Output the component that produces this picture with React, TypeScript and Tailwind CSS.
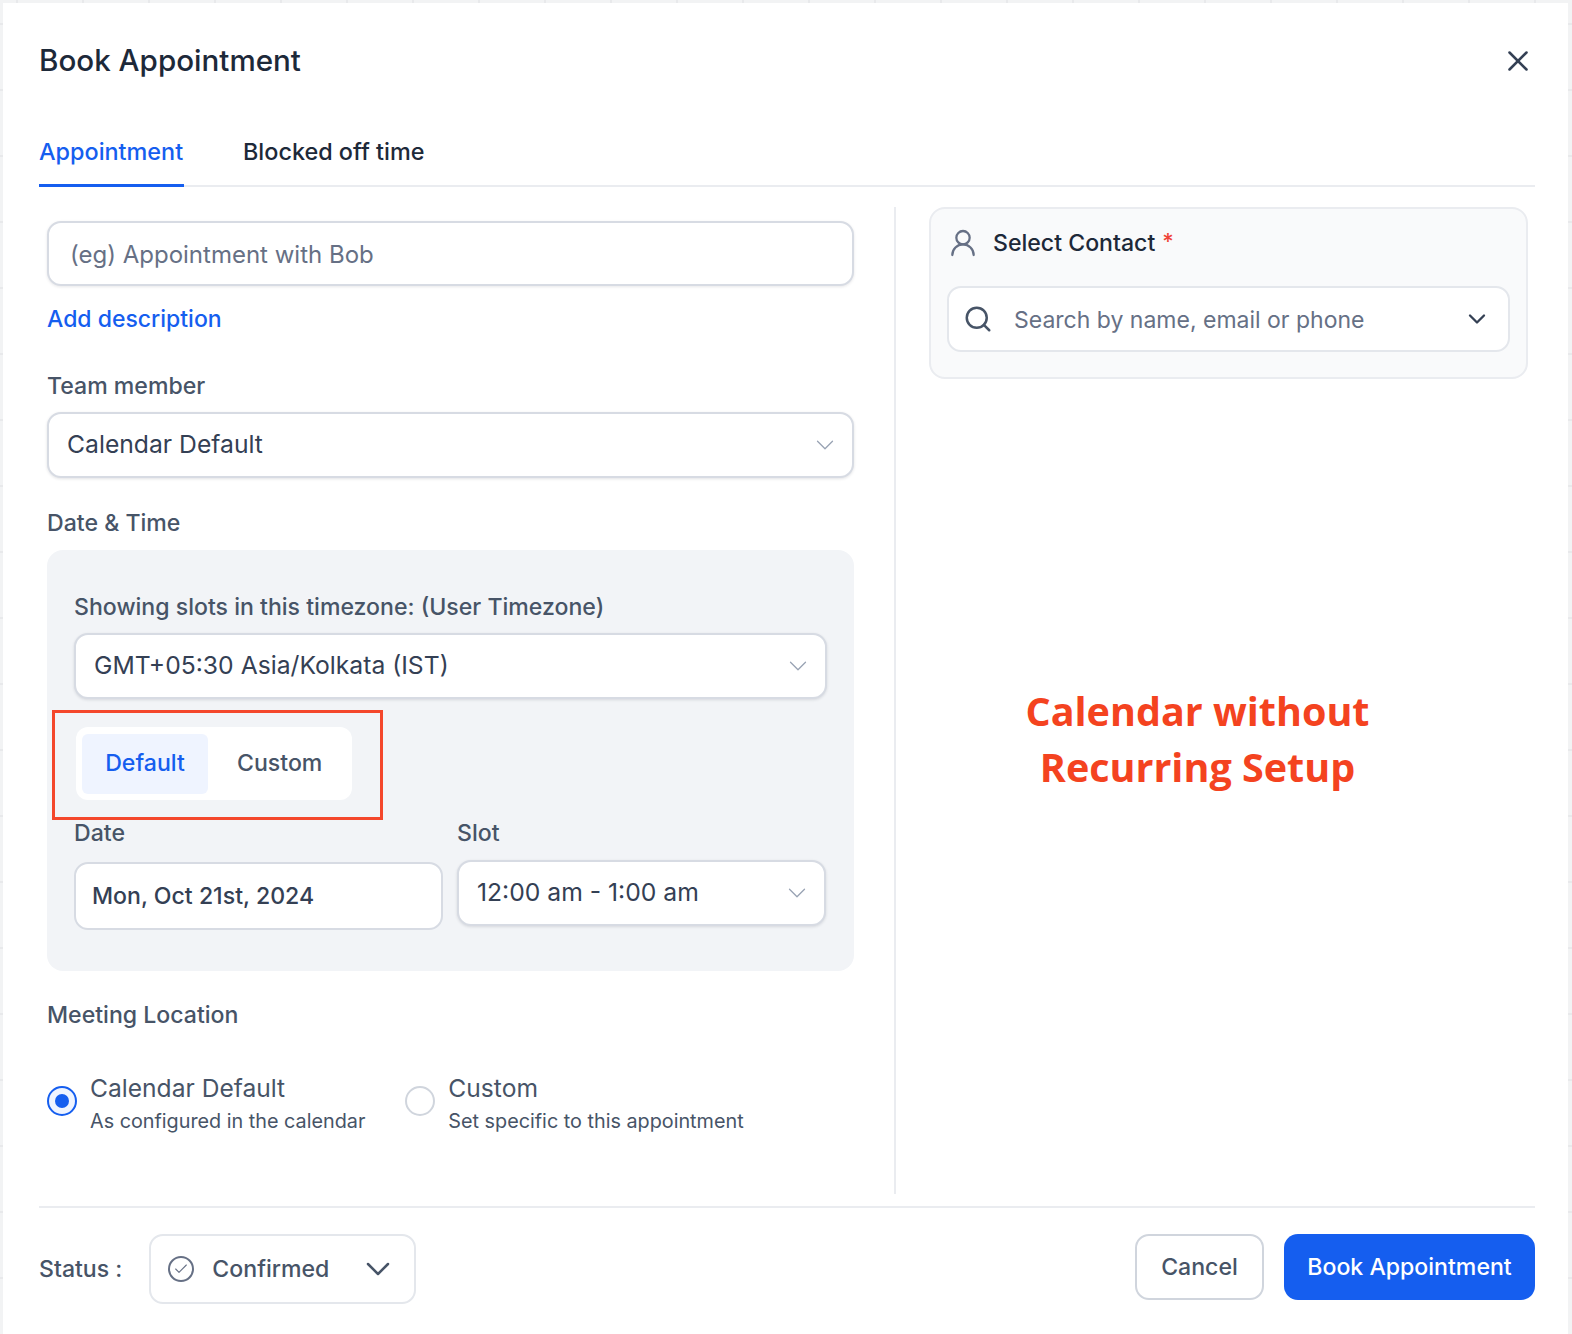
import { Check, ChevronDown, Search, UserRound, X } from 'lucide-react';

const font = "font-['Inter',sans-serif]";

function SelectBox({ value, className }: { value: string; className: string }) {
  return (
    <div
      className={`flex items-center justify-between rounded-[14px] border-2 border-[#d7dbe3] bg-white pl-[18px] pr-[12px] text-[24.7px] text-[#344054] shadow-[0_1px_3px_rgba(16,24,40,0.12)] ${className}`}
    >
      <span>{value}</span>
      <ChevronDown size={30} strokeWidth={1} className="text-[#98a2b3]" />
    </div>
  );
}

function RadioOption({ title, hint, active }: { title: string; hint: string; active?: boolean }) {
  return (
    <div className="flex items-start gap-[13px]">
      <div
        className={`mt-[17px] flex h-[30px] w-[30px] items-center justify-center rounded-full border-2 ${
          active ? 'border-[#155eef] bg-[#eff4ff]' : 'border-[#d0d5dd] bg-white'
        }`}
      >
        {active && <div className="h-[14px] w-[14px] rounded-full bg-[#155eef]" />}
      </div>
      <div className="pt-[3px]">
        <div className="text-[24.6px] leading-[32px] text-[#475467]">{title}</div>
        <div className="mt-[3px] text-[19.8px] leading-[28px] text-[#475467]">{hint}</div>
      </div>
    </div>
  );
}

export default function App() {
  return (
    <div
      className={`h-[1334px] w-[1572px] overflow-hidden bg-[#f2f3f4] bg-[linear-gradient(to_right,#e8e9eb_2px,transparent_2px),linear-gradient(to_bottom,#e8e9eb_2px,transparent_2px)] bg-[size:66px_66px] bg-[position:16px_23px] pl-[3px] pr-[4px] pt-[3px] ${font}`}
    >
      <div className="h-[1331px] bg-white pl-[36px] pr-[33px]">
        {/* header */}
        <div className="flex h-[115px] items-start justify-between pt-[38px]">
          <h1 className="text-[29.6px] font-medium leading-[38px] text-[#1d2939]">Book Appointment</h1>
          <X size={34} strokeWidth={1.8} className="mt-[3px] text-[#344054]" />
        </div>

        {/* tabs */}
        <div className="flex h-[69px] items-start gap-[59px] border-b-2 border-[#eaecf0] text-[23.4px] font-medium">
          <div className="-mb-[2px] h-[69px] w-[145px] border-b-[3px] border-[#155eef] pt-[18px] leading-[32px] text-[#155eef]">
            Appointment
          </div>
          <div className="pt-[18px] leading-[32px] text-[#1d2939]">Blocked off time</div>
        </div>

        <div className="flex h-[1019px] items-start pt-[20px]">
          {/* form */}
          <div className="h-[987px] w-[857px] border-r-2 border-[#eaecf0] pl-[8px] pr-[40px] pt-[14px]">
            <div className="flex h-[65px] items-center rounded-[14px] border-2 border-[#d7dbe3] bg-white pl-[21px] pt-[3px] text-[24px] text-[#667085] shadow-[0_1px_3px_rgba(16,24,40,0.1)]">
              (eg) Appointment with Bob
            </div>
            <div className="mt-[17px] text-[23px] font-medium leading-[32px] text-[#155eef]">Add description</div>

            <div className="mt-[35px] text-[23.1px] font-medium leading-[32px] text-[#475467]">Team member</div>
            <SelectBox value="Calendar Default" className="mt-[10px] h-[66px]" />

            <div className="mt-[29px] text-[23.1px] font-medium leading-[32px] text-[#475467]">Date &amp; Time</div>
            <div className="relative mt-[11px] h-[421px] rounded-[16px] bg-[#f2f4f7] px-[27px] pt-[41px]">
              <div className="text-[23.1px] font-medium leading-[32px] text-[#475467]">
                Showing slots in this timezone: (User Timezone)
              </div>
              <SelectBox value="GMT+05:30 Asia/Kolkata (IST)" className="mt-[10px] h-[66px]" />

              <div className="ml-[2px] mt-[28px] flex h-[73px] w-[276px] items-center rounded-[12px] bg-white pl-[6px] text-[23.1px] font-medium">
                <div className="flex h-[60px] w-[126px] items-center justify-center rounded-[6px] bg-[#eff4ff] text-[#155eef]">
                  Default
                </div>
                <div className="ml-[29px] text-[#475467]">Custom</div>
              </div>

              <div className="mt-[17px] grid grid-cols-[369px_369px] gap-x-[14px] text-[23.1px] font-medium leading-[32px] text-[#475467]">
                <div>Date</div>
                <div>Slot</div>
              </div>

              <div className="mt-[11px] grid grid-cols-[369px_369px] items-start gap-x-[14px]">
                <div className="mt-[2px] flex h-[68px] items-center rounded-[14px] border-2 border-[#d7dbe3] bg-white pl-[16px] text-[23.1px] font-medium text-[#344054]">
                  Mon, Oct 21st, 2024
                </div>
                <SelectBox value="12:00 am - 1:00 am" className="h-[66px]" />
              </div>

              {/* annotation box */}
              <div className="absolute left-[5px] top-[160px] h-[110px] w-[331px] border-[3px] border-[#f4472b]" />
            </div>

            <div className="mt-[28px] text-[23.1px] font-medium leading-[32px] text-[#475467]">Meeting Location</div>
            <div className="mt-[38px] flex gap-[40px]">
              <RadioOption active title="Calendar Default" hint="As configured in the calendar" />
              <RadioOption title="Custom" hint="Set specific to this appointment" />
            </div>
          </div>

          {/* contact column */}
          <div className="w-[639px] pl-[33px] pr-[7px]">
            <div className="h-[172px] rounded-[16px] border-2 border-[#eaecf0] bg-[#f9fafb] pl-[16px] pr-[16px] pt-[16px]">
              <div className="flex h-[36px] items-center">
                <UserRound size={32} strokeWidth={1.7} className="text-[#667085]" />
                <span className="ml-[14px] text-[23.1px] font-medium text-[#1d2939]">Select Contact</span>
                <span className="ml-[7px] -mt-[4px] text-[22px] font-medium text-[#f04438]">*</span>
              </div>
              <div className="mt-[25px] flex h-[66px] items-center rounded-[14px] border-2 border-[#e4e7ec] bg-white pl-[14px] pr-[17px] text-[23px] text-[#667085]">
                <Search size={30} strokeWidth={2} className="text-[#475467]" />
                <span className="ml-[21px] flex-1 pt-[3px]">Search by name, email or phone</span>
                <ChevronDown size={28} strokeWidth={2} className="text-[#344054]" />
              </div>
            </div>
            <div className="mr-[62px] mt-[304px] text-center font-['Open_Sans',sans-serif] text-[39.5px] font-bold leading-[56px] text-[#f4431f]">
              Calendar without
              <br />
              Recurring Setup
            </div>
          </div>
        </div>

        {/* footer */}
        <div className="flex h-[128px] items-start justify-between border-t-2 border-[#eaecf0] pt-[26px]">
          <div className="flex items-center">
            <span className="text-[23.1px] font-medium text-[#475467]">Status :</span>
            <div className="ml-[27px] flex h-[70px] w-[267px] items-center rounded-[14px] border-2 border-[#e4e7ec] bg-white pl-[17px] text-[23.1px] font-medium text-[#475467]">
              <div className="flex h-[26px] w-[26px] items-center justify-center rounded-full border-2 border-[#667085]">
                <Check size={16} strokeWidth={1.6} className="text-[#667085]" />
              </div>
              <span className="ml-[18px]">Confirmed</span>
              <ChevronDown size={40} strokeWidth={1.5} className="ml-[29px] text-[#475467]" />
            </div>
          </div>
          <div className="flex items-center gap-[20px] text-[23.1px] font-medium">
            <button className="h-[66px] w-[129px] rounded-[14px] border-2 border-[#d0d5dd] bg-white text-[#475467]">
              Cancel
            </button>
            <button className="h-[66px] w-[251px] rounded-[14px] bg-[#155eef] text-white">Book Appointment</button>
          </div>
        </div>
      </div>
    </div>
  );
}
